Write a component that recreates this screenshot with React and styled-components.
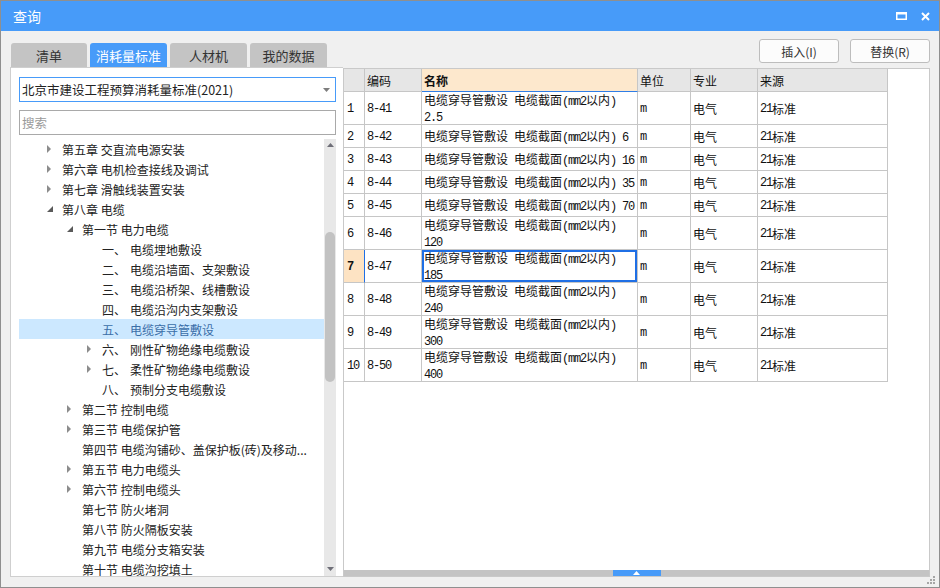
import React from "react";
import styled, { createGlobalStyle } from "styled-components";

const GlobalStyle = createGlobalStyle`
  html, body {
    margin: 0;
    padding: 0;
    background: #ffffff;
  }
  body {
    font-family: "Noto Sans CJK SC", "Noto Sans", sans-serif;
  }
  * {
    box-sizing: border-box;
  }
`;

// Dialog window
const Window = styled.div`
  position: relative;
  width: 940px;
  height: 588px;
  border: 1px solid #8f8f8f;
  background: #f0f0f0;
  display: flex;
  flex-direction: column;
  overflow: hidden;
`;

const TitleBar = styled.div`
  flex: none;
  height: 30px;
  background: #479bf9;
  color: #ffffff;
  display: flex;
  align-items: center;
  justify-content: space-between;
  padding: 0 9px 0 12px;
  font-size: 14px;
`;

const WinControls = styled.div`
  display: flex;
  align-items: center;
  gap: 14px;
`;

const Body = styled.div`
  flex: 1;
  min-height: 0;
  display: flex;
  padding: 8px 9px 10px 9px;
`;

// Left column (tabs + tree panel)
const LeftCol = styled.div`
  width: 333px;
  flex: none;
  display: flex;
  flex-direction: column;
  padding-top: 4px;
`;

const Tabs = styled.div`
  display: flex;
  gap: 3px;
  padding-left: 1px;
  height: 24px;
  flex: none;
`;

const Tab = styled.div`
  width: ${({ $w }) => $w}px;
  height: 24px;
  border-radius: 3px 3px 0 0;
  background: ${({ $active }) => ($active ? "#479bf9" : "#c4c4c4")};
  color: ${({ $active }) => ($active ? "#ffffff" : "#333333")};
  font-size: 13px;
  display: flex;
  align-items: center;
  justify-content: center;
`;

const Panel = styled.div`
  flex: 1;
  min-height: 0;
  background: #ffffff;
  border: 1px solid #cfcfcf;
  border-right: none;
  display: flex;
  flex-direction: column;
  padding: 9px 7px 0 8px;
`;

const Select = styled.div`
  height: 25px;
  flex: none;
  border: 1px solid #479bf9;
  display: flex;
  align-items: center;
  justify-content: space-between;
  padding: 0 5px 0 2px;
  font-size: 12.5px;
  color: #222222;
  margin-bottom: 8px;
`;

const SearchInput = styled.input`
  height: 25px;
  flex: none;
  border: 1px solid #a9a9a9;
  padding: 0 2px;
  font-family: inherit;
  font-size: 12.5px;
  color: #222222;
  outline: none;
  margin-bottom: 4px;

  &::placeholder {
    color: #9a9a9a;
  }
`;

const Tree = styled.div`
  flex: 1;
  min-height: 0;
  display: flex;
`;

const TreeList = styled.div`
  flex: 1;
  overflow: hidden;
`;

const TreeRow = styled.div`
  height: 20px;
  display: flex;
  align-items: center;
  padding-left: ${({ $level }) => 28 + $level * 20}px;
  background: ${({ $selected }) => ($selected ? "#cce8ff" : "transparent")};
  color: ${({ $selected }) => ($selected ? "#3a6ea8" : "#222222")};
  font-size: 12px;
  white-space: nowrap;
`;

const Toggle = styled.span`
  width: 15px;
  flex: none;
  display: flex;
  align-items: center;
`;

const ItemNum = styled.span`
  width: 28px;
  flex: none;
`;

const ScrollTrack = styled.div`
  width: 12px;
  flex: none;
  background: #e8e8e8;
  display: flex;
  flex-direction: column;
  align-items: center;
  padding: 4px 0 5px;
`;

const ScrollThumb = styled.div`
  width: 10px;
  height: 150px;
  margin-top: 85px;
  border-radius: 5px;
  background: #c2c2c2;
`;

const Spacer = styled.div`
  flex: 1;
`;

// Right column (buttons + table)
const RightCol = styled.div`
  flex: 1;
  min-width: 0;
  display: flex;
  flex-direction: column;
`;

const ButtonRow = styled.div`
  height: 24px;
  flex: none;
  display: flex;
  justify-content: flex-end;
  gap: 11px;
  margin-bottom: 5px;
`;

const Button = styled.button`
  width: 80px;
  height: 24px;
  border: 1px solid #bdbdbd;
  border-radius: 3px;
  background: #fcfcfc;
  color: #333333;
  font-family: inherit;
  font-size: 12px;
  padding: 0;
`;

const TableBox = styled.div`
  flex: 1;
  min-height: 0;
  background: #ffffff;
  border: 1px solid #c9c9c9;
  display: flex;
  flex-direction: column;
  overflow: hidden;
`;

const Row = styled.div`
  display: grid;
  grid-template-columns: 21px 57px 216px 53px 67px 130px;
  width: 544px;
  height: ${({ $tall }) => ($tall ? 33 : 23)}px;
  flex: none;
`;

const Cell = styled.div`
  display: flex;
  align-items: center;
  padding: 2px 0 0 ${({ $pad }) => $pad ?? 2}px;
  border-right: 1px solid ${({ $edge }) => ($edge ? "#1f6fe5" : "#c6c6c6")};
  border-bottom: 1px solid ${({ $under }) => ($under ? "#2f7de6" : "#c6c6c6")};
  background: ${({ $bg }) => $bg || "#ffffff"};
  font-size: 12px;
  line-height: 14px;
  font-weight: ${({ $bold }) => ($bold ? 700 : 400)};
  color: #111111;
  overflow: hidden;
  white-space: nowrap;
  box-shadow: ${({ $selected }) => ($selected ? "inset 0 0 0 2px #1f6fe5" : "none")};
`;

const Lines = styled.div`
  display: flex;
  flex-direction: column;
  line-height: 13px;
`;

const Half = styled.span`
  font-family: "Liberation Mono", monospace;
  font-size: 12px;
  letter-spacing: -1.2px;
`;

const Splitter = styled.div`
  margin-top: auto;
  height: 6px;
  flex: none;
  background: #c4c4c4;
  display: flex;
  justify-content: center;
`;

const SplitHandle = styled.div`
  width: 48px;
  height: 6px;
  background: #479bf9;
  display: flex;
  align-items: center;
  justify-content: center;
`;

const Grip = styled.svg`
  position: absolute;
  right: 3px;
  bottom: 2px;
`;

const tabs = [
  { label: "清单", w: 76 },
  { label: "消耗量标准", w: 77, active: true },
  { label: "人材机", w: 77 },
  { label: "我的数据", w: 77 },
];

// toggle: "c" collapsed, "e" expanded, null leaf
const treeRows = [
  { level: 0, toggle: "c", text: "第五章 交直流电源安装" },
  { level: 0, toggle: "c", text: "第六章 电机检查接线及调试" },
  { level: 0, toggle: "c", text: "第七章 滑触线装置安装" },
  { level: 0, toggle: "e", text: "第八章 电缆" },
  { level: 1, toggle: "e", text: "第一节 电力电缆" },
  { level: 2, num: "一、", text: "电缆埋地敷设" },
  { level: 2, num: "二、", text: "电缆沿墙面、支架敷设" },
  { level: 2, num: "三、", text: "电缆沿桥架、线槽敷设" },
  { level: 2, num: "四、", text: "电缆沿沟内支架敷设" },
  { level: 2, num: "五、", text: "电缆穿导管敷设", selected: true },
  { level: 2, toggle: "c", num: "六、", text: "刚性矿物绝缘电缆敷设" },
  { level: 2, toggle: "c", num: "七、", text: "柔性矿物绝缘电缆敷设" },
  { level: 2, num: "八、", text: "预制分支电缆敷设" },
  { level: 1, toggle: "c", text: "第二节 控制电缆" },
  { level: 1, toggle: "c", text: "第三节 电缆保护管" },
  { level: 1, text: "第四节 电缆沟铺砂、盖保护板(砖)及移动..." },
  { level: 1, toggle: "c", text: "第五节 电力电缆头" },
  { level: 1, toggle: "c", text: "第六节 控制电缆头" },
  { level: 1, text: "第七节 防火堵洞" },
  { level: 1, text: "第八节 防火隔板安装" },
  { level: 1, text: "第九节 电缆分支箱安装" },
  { level: 1, text: "第十节 电缆沟挖填土" },
];

const base = "电缆穿导管敷设 电缆截面(mm2以内)";
const rows = [
  { no: "1", code: "8-41", name: [base, "2.5"] },
  { no: "2", code: "8-42", name: [base + " 6"] },
  { no: "3", code: "8-43", name: [base + " 16"] },
  { no: "4", code: "8-44", name: [base + " 35"] },
  { no: "5", code: "8-45", name: [base + " 70"] },
  { no: "6", code: "8-46", name: [base, "120"] },
  { no: "7", code: "8-47", name: [base, "185"], selected: true },
  { no: "8", code: "8-48", name: [base, "240"] },
  { no: "9", code: "8-49", name: [base, "300"] },
  { no: "10", code: "8-50", name: [base, "400"] },
];

// ascii runs get the narrow half-width font, like the original grid font
const Mixed = ({ text }) =>
  text
    .split(/([\x20-\x7e]+)/)
    .map((part, i) => (/[\x20-\x7e]/.test(part) ? <Half key={i}>{part}</Half> : part));

const Arrow = ({ type }) =>
  type === "e" ? (
    <svg width="6" height="6" viewBox="0 0 6 6">
      <polygon points="6,0 6,6 0,6" fill="#5a5a5a" />
    </svg>
  ) : (
    <svg width="5" height="8" viewBox="0 0 5 8">
      <polygon points="0,0 4,4 0,8" fill="#8c8c8c" />
    </svg>
  );

export default function App() {
  return (
    <>
      <GlobalStyle />
      <Window>
        <TitleBar>
          <span>查询</span>
          <WinControls>
            <svg width="11" height="8" viewBox="0 0 11 8">
              <rect x="0.75" y="1" width="9.5" height="6.25" fill="none" stroke="#fff" strokeWidth="1.5" />
              <rect x="0" y="0" width="11" height="2.5" fill="#fff" />
            </svg>
            <svg width="9" height="9" viewBox="0 0 9 9">
              <path d="M1 1 L8 8 M8 1 L1 8" stroke="#fff" strokeWidth="2" />
            </svg>
          </WinControls>
        </TitleBar>

        <Body>
          <LeftCol>
            <Tabs>
              {tabs.map((t) => (
                <Tab key={t.label} $w={t.w} $active={t.active}>
                  {t.label}
                </Tab>
              ))}
            </Tabs>
            <Panel>
              <Select>
                <span>北京市建设工程预算消耗量标准(2021)</span>
                <svg width="7" height="4" viewBox="0 0 7 4">
                  <polygon points="0,0 7,0 3.5,4" fill="#7d7d7d" />
                </svg>
              </Select>
              <SearchInput placeholder="搜索" readOnly />
              <Tree>
                <TreeList>
                  {treeRows.map((r, i) => (
                    <TreeRow key={i} $level={r.level} $selected={r.selected}>
                      <Toggle>{r.toggle && <Arrow type={r.toggle} />}</Toggle>
                      {r.num && <ItemNum>{r.num}</ItemNum>}
                      <span>{r.text}</span>
                    </TreeRow>
                  ))}
                </TreeList>
                <ScrollTrack>
                  <svg width="7" height="4" viewBox="0 0 7 4">
                    <polygon points="0,4 7,4 3.5,0" fill="#6f6f78" />
                  </svg>
                  <ScrollThumb />
                  <Spacer />
                  <svg width="7" height="4" viewBox="0 0 7 4">
                    <polygon points="0,0 7,0 3.5,4" fill="#6f6f78" />
                  </svg>
                </ScrollTrack>
              </Tree>
            </Panel>
          </LeftCol>

          <RightCol>
            <ButtonRow>
              <Button>插入(I)</Button>
              <Button>替换(R)</Button>
            </ButtonRow>
            <TableBox>
              <Row>
                <Cell $bg="#e6e6e6" />
                <Cell $bg="#e6e6e6">编码</Cell>
                <Cell $bg="#fde8cd" $bold $under>
                  名称
                </Cell>
                <Cell $bg="#e6e6e6">单位</Cell>
                <Cell $bg="#e6e6e6">专业</Cell>
                <Cell $bg="#e6e6e6">来源</Cell>
              </Row>
              {rows.map((r) => (
                <Row key={r.no} $tall={r.name.length > 1}>
                  <Cell $pad={3} $bg={r.selected ? "#fde3c3" : undefined} $bold={r.selected} $edge={r.selected}>
                    <Mixed text={r.no} />
                  </Cell>
                  <Cell>
                    <Mixed text={r.code} />
                  </Cell>
                  <Cell $selected={r.selected}>
                    <Lines>
                      {r.name.map((line, i) => (
                        <span key={i}>
                          <Mixed text={line} />
                        </span>
                      ))}
                    </Lines>
                  </Cell>
                  <Cell>
                    <Mixed text="m" />
                  </Cell>
                  <Cell>电气</Cell>
                  <Cell>
                    <Mixed text="21" />
                    标准
                  </Cell>
                </Row>
              ))}
              <Splitter>
                <SplitHandle>
                  <svg width="7" height="4" viewBox="0 0 7 4">
                    <polygon points="0,4 7,4 3.5,0" fill="#ffffff" />
                  </svg>
                </SplitHandle>
              </Splitter>
            </TableBox>
          </RightCol>
        </Body>

        <Grip width="9" height="9" viewBox="0 0 9 9">
          <rect x="6" y="0" width="2" height="2" fill="#a6a6a6" />
          <rect x="3" y="3" width="2" height="2" fill="#a6a6a6" />
          <rect x="6" y="3" width="2" height="2" fill="#a6a6a6" />
          <rect x="0" y="6" width="2" height="2" fill="#a6a6a6" />
          <rect x="3" y="6" width="2" height="2" fill="#a6a6a6" />
          <rect x="6" y="6" width="2" height="2" fill="#a6a6a6" />
        </Grip>
      </Window>
    </>
  );
}
